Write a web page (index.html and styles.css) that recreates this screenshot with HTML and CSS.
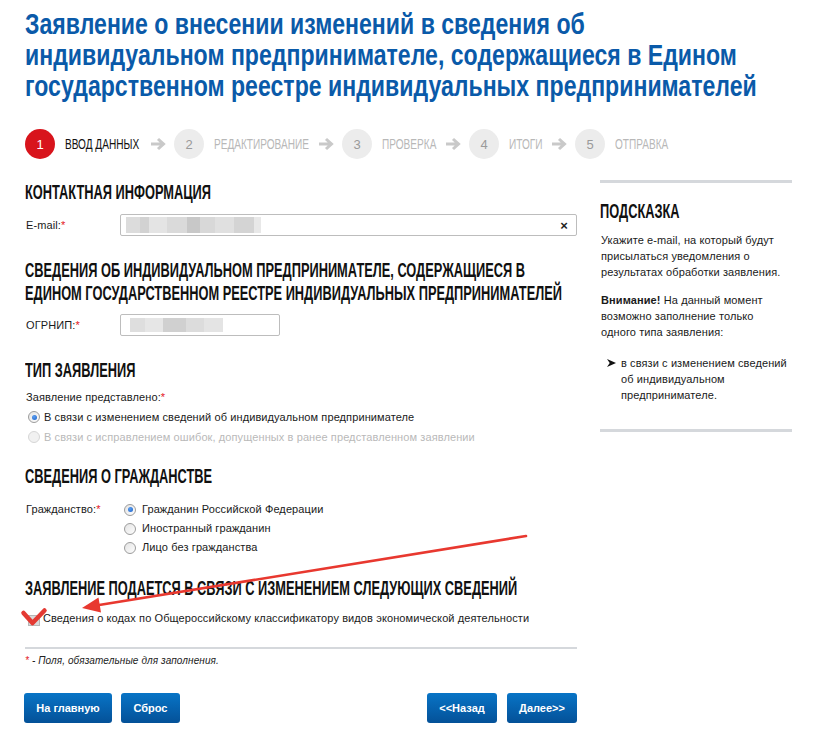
FILE: index.html
```html
<!DOCTYPE html>
<html lang="ru">
<head>
<meta charset="utf-8">
<title>Заявление</title>
<link rel="stylesheet" href="styles.css">
</head>
<body>
<div class="page">
  <h1 class="title">Заявление о внесении изменений в сведения об<br>индивидуальном предпринимателе, содержащиеся в Едином<br>государственном реестре индивидуальных предпринимателей</h1>

  <ol class="steps">
    <li class="step active"><span class="num">1</span><span class="lbl w1"><span class="t">Ввод данных</span></span></li>
    <li class="arr"><svg width="16" height="14" viewBox="0 0 16 14"><path d="M1 7H13M8 2L13.5 7L8 12" fill="none" stroke="#c9c9c9" stroke-width="3"/></svg></li>
    <li class="step"><span class="num">2</span><span class="lbl w2"><span class="t">Редактирование</span></span></li>
    <li class="arr"><svg width="16" height="14" viewBox="0 0 16 14"><path d="M1 7H13M8 2L13.5 7L8 12" fill="none" stroke="#c9c9c9" stroke-width="3"/></svg></li>
    <li class="step"><span class="num">3</span><span class="lbl w3"><span class="t">Проверка</span></span></li>
    <li class="arr"><svg width="16" height="14" viewBox="0 0 16 14"><path d="M1 7H13M8 2L13.5 7L8 12" fill="none" stroke="#c9c9c9" stroke-width="3"/></svg></li>
    <li class="step"><span class="num">4</span><span class="lbl w4"><span class="t">Итоги</span></span></li>
    <li class="arr"><svg width="16" height="14" viewBox="0 0 16 14"><path d="M1 7H13M8 2L13.5 7L8 12" fill="none" stroke="#c9c9c9" stroke-width="3"/></svg></li>
    <li class="step"><span class="num">5</span><span class="lbl w5"><span class="t">Отправка</span></span></li>
  </ol>

  <div class="layout">
    <main class="main">
      <h2 class="sec">Контактная информация</h2>
      <div class="row r-email">
        <span class="lab">E-mail:<span class="req">*</span></span>
        <div class="input wide"><span class="blur b1"></span><span class="clear">×</span></div>
      </div>

      <h2 class="sec two">Сведения об индивидуальном предпринимателе, содержащиеся в<br>Едином государственном реестре индивидуальных предпринимателей</h2>
      <div class="row r-ogrn">
        <span class="lab">ОГРНИП:<span class="req">*</span></span>
        <div class="input short"><span class="blur b2"></span></div>
      </div>

      <h2 class="sec">Тип заявления</h2>
      <div class="caption">Заявление представлено:<span class="req">*</span></div>
      <div class="opts indent">
        <div class="opt"><span class="radio on"></span>В связи с изменением сведений об индивидуальном предпринимателе</div>
        <div class="opt dis"><span class="radio off"></span>В связи с исправлением ошибок, допущенных в ранее представленном заявлении</div>
      </div>

      <h2 class="sec s-cit">Сведения о гражданстве</h2>
      <div class="row r-cit">
        <span class="lab lab2">Гражданство:<span class="req">*</span></span>
        <div class="opts tight">
          <div class="opt"><span class="radio on"></span>Гражданин Российской Федерации</div>
          <div class="opt"><span class="radio"></span>Иностранный гражданин</div>
          <div class="opt"><span class="radio"></span>Лицо без гражданства</div>
        </div>
      </div>

      <h2 class="sec s-chg">Заявление подается в связи с изменением следующих сведений</h2>
      <div class="opt chk"><span class="box"></span>Сведения о кодах по Общероссийскому классификатору видов экономической деятельности</div>

      <div class="rule"></div>
      <p class="note"><span class="req">*</span> - Поля, обязательные для заполнения.</p>

      <div class="buttons">
        <div class="group">
          <span class="btn b-home">На главную</span>
          <span class="btn b-reset">Сброс</span>
        </div>
        <div class="group">
          <span class="btn b-nav">&lt;&lt;Назад</span>
          <span class="btn b-nav">Далее&gt;&gt;</span>
        </div>
      </div>
    </main>

    <aside class="hint">
      <h2 class="sec">Подсказка</h2>
      <p>Укажите e-mail, на который будут<br>присылаться уведомления о<br>результатах обработки заявления.</p>
      <p class="p2"><b>Внимание!</b> На данный момент<br>возможно заполнение только<br>одного типа заявления:</p>
      <ul class="list">
        <li>в связи с изменением сведений<br>об индивидуальном<br>предпринимателе.</li>
      </ul>
    </aside>
  </div>
</div>

<svg class="annot" width="818" height="745" viewBox="0 0 818 745">
  <line x1="526" y1="536" x2="96" y2="605.5" stroke="#e8382f" stroke-width="2.6" stroke-linecap="round"/>
  <polygon points="82,608 101,612.5 98.5,597.5" fill="#e8382f"/>
  <path d="M23.5 613 L32.5 623 L44.5 610.5" fill="none" stroke="#e43a33" stroke-width="4.5" stroke-linecap="round" stroke-linejoin="round"/>
</svg>
</body>
</html>
```
FILE: styles.css
```css
* { box-sizing: border-box; }

body {
  margin: 0;
  background: #fff;
  color: #1a1a1a;
  font-family: "Liberation Sans", Arial, sans-serif;
  font-size: 11px;
  letter-spacing: 0.1px;
}

.page {
  padding: 8px 26px 0 25px;
}

/* condensed display type: Liberation Sans squeezed horizontally */
.title,
.sec,
.lbl .t,
.num {
  font-family: "Liberation Sans", Arial, sans-serif;
  letter-spacing: 0;
}

.title {
  margin: 0;
  font-weight: bold;
  font-size: 30px;
  line-height: 31px;
  color: #0a5aa9;
  white-space: nowrap;
  transform: scaleX(0.77);
  transform-origin: left center;
}

/* steps */
.steps {
  list-style: none;
  margin: 28px 0 0;
  padding: 0;
  display: flex;
  align-items: center;
  height: 30px;
}
.step {
  display: flex;
  align-items: center;
  gap: 10px;
}
.num {
  width: 30px;
  height: 30px;
  border-radius: 50%;
  background: #ececec;
  color: #9a9a9a;
  display: flex;
  align-items: center;
  justify-content: center;
  font-size: 13px;
}
.step.active .num {
  background: #d8141c;
  color: #fff;
}
.lbl {
  display: block;
  white-space: nowrap;
  height: 16px;
}
.lbl .t {
  display: inline-block;
  font-size: 14px;
  line-height: 16px;
  text-transform: uppercase;
  color: #b8b8b8;
  transform: scaleX(0.72);
  transform-origin: left center;
}
.step.active .lbl .t { color: #111; }
.w1 { width: 75px; }
.w2 { width: 94px; }
.w3 { width: 53px; }
.w4 { width: 32px; }
.w5 { width: 53px; }
.arr {
  display: flex;
  margin: 0 8px 0 10px;
}

/* layout */
.layout {
  display: flex;
  gap: 23px;
  margin-top: 21px;
}
.main { width: 552px; }
.hint { width: 192px; }

.sec {
  margin: 0;
  font-weight: bold;
  font-size: 21px;
  line-height: 24px;
  text-transform: uppercase;
  color: #111;
  white-space: nowrap;
  transform: scaleX(0.61);
  transform-origin: left center;
}
.sec.two { line-height: 23px; }

.main .sec { margin-top: 22px; }
.main .sec:first-child { margin-top: 0; }
.main .sec.s-cit { margin-top: 17px; }
.main .sec.s-chg { margin-top: 19px; }

.row {
  display: flex;
  align-items: center;
  margin-top: 10px;
}
.lab {
  width: 95px;
  padding-left: 1px;
  flex: none;
}
.lab2 { width: 99px; align-self: flex-start; padding-top: 3px; }
.req { color: #e3141b; }

.input {
  height: 22px;
  border: 1px solid #bdbdbd;
  border-radius: 2px;
  background: #fff;
  display: flex;
  align-items: center;
  padding: 0 5px;
}
.input.wide { width: 457px; justify-content: space-between; }
.input.short { width: 160px; }
.blur {
  height: 16px;
  display: block;
}
.blur.b1 {
  width: 135px;
  background: linear-gradient(90deg, #dcdcdc 0 10%, #d2d2d2 10% 17%, #e4e4e4 17% 30%, #dadada 30% 45%, #c8c8c8 45% 55%, #d8d8d8 55% 66%, #e0e0e0 66% 80%, #d4d4d4 80% 95%, #e8e8e8 95%);
}
.blur.b2 {
  width: 93px;
  height: 14px;
  margin-left: 4px;
  background: linear-gradient(90deg, #dedede 0 16%, #e6e6e6 16% 36%, #d0d0d0 36% 60%, #dcdcdc 60% 80%, #e4e4e4 80%);
}
.clear {
  font-size: 13px;
  font-weight: bold;
  color: #222;
  margin-right: 3px;
}

.caption {
  margin-top: 7px;
  line-height: 16px;
  padding-left: 1px;
}

.opts.indent { margin-top: 2px; padding-left: 3px; }
.opt {
  display: flex;
  align-items: center;
  gap: 4px;
  line-height: 20px;
  height: 20px;
  white-space: nowrap;
}
.opts.tight .opt { height: 19px; line-height: 19px; gap: 6px; }
.opt.dis { color: #b9b9b9; }

.r-cit { margin-top: 12px; align-items: flex-start; }

.radio {
  width: 12px;
  height: 12px;
  border-radius: 50%;
  border: 1px solid #9c9c9c;
  background: linear-gradient(135deg, #e4e4e4, #fdfdfd);
  flex: none;
  display: inline-flex;
  align-items: center;
  justify-content: center;
}
.radio.on::after {
  content: "";
  width: 5px;
  height: 5px;
  border-radius: 50%;
  background: radial-gradient(circle at 40% 35%, #5b9ff0, #1a5fc8);
}
.radio.off {
  border-color: #d6d6d6;
  background: #f1f1f1;
}

.chk {
  margin-top: 8px;
  padding-left: 3px;
  gap: 3px;
}
.box {
  width: 12px;
  height: 11px;
  border: 1px solid #b7b7b7;
  background: #d9d9d9;
  margin-top: 4px;
  flex: none;
}

.rule {
  height: 2px;
  background: #d5d8dc;
  margin-top: 19px;
}
.note {
  margin: 5px 0 0;
  font-size: 10px;
  font-style: italic;
  line-height: 14px;
  color: #222;
}

.buttons {
  display: flex;
  justify-content: space-between;
  margin-top: 25px;
}
.group { display: flex; gap: 9px; }
.group:last-child { gap: 10px; }
.btn {
  height: 30px;
  display: inline-flex;
  align-items: center;
  justify-content: center;
  padding: 0 10px;
  border-radius: 3px;
  background: linear-gradient(#0874c6, #045198);
  color: #fff;
  font-weight: bold;
  font-size: 11px;
  letter-spacing: 0;
}
.b-home { margin-left: -1px; width: 88px; }
.b-reset { width: 59px; }
.b-nav { width: 70px; }

/* hint */
.hint {
  border-top: 3px solid #d5d8dc;
  border-bottom: 3px solid #d5d8dc;
  padding: 16px 0 26px;
  align-self: flex-start;
}
.hint p {
  margin: 9px 0 0;
  line-height: 16px;
  padding-left: 1px;
}
.hint .p2 { margin-top: 12px; }
.hint b { font-weight: bold; }
.list {
  list-style: none;
  margin: 15px 0 0;
  padding: 0 0 0 21px;
  line-height: 16px;
}
.list li { position: relative; }
.list li::before {
  content: "";
  position: absolute;
  left: -14px;
  top: 4px;
  width: 9px;
  height: 8px;
  background: #111;
  clip-path: polygon(0 0, 100% 50%, 0 100%, 30% 50%);
}

.annot {
  position: absolute;
  left: 0;
  top: 0;
  pointer-events: none;
}
```
